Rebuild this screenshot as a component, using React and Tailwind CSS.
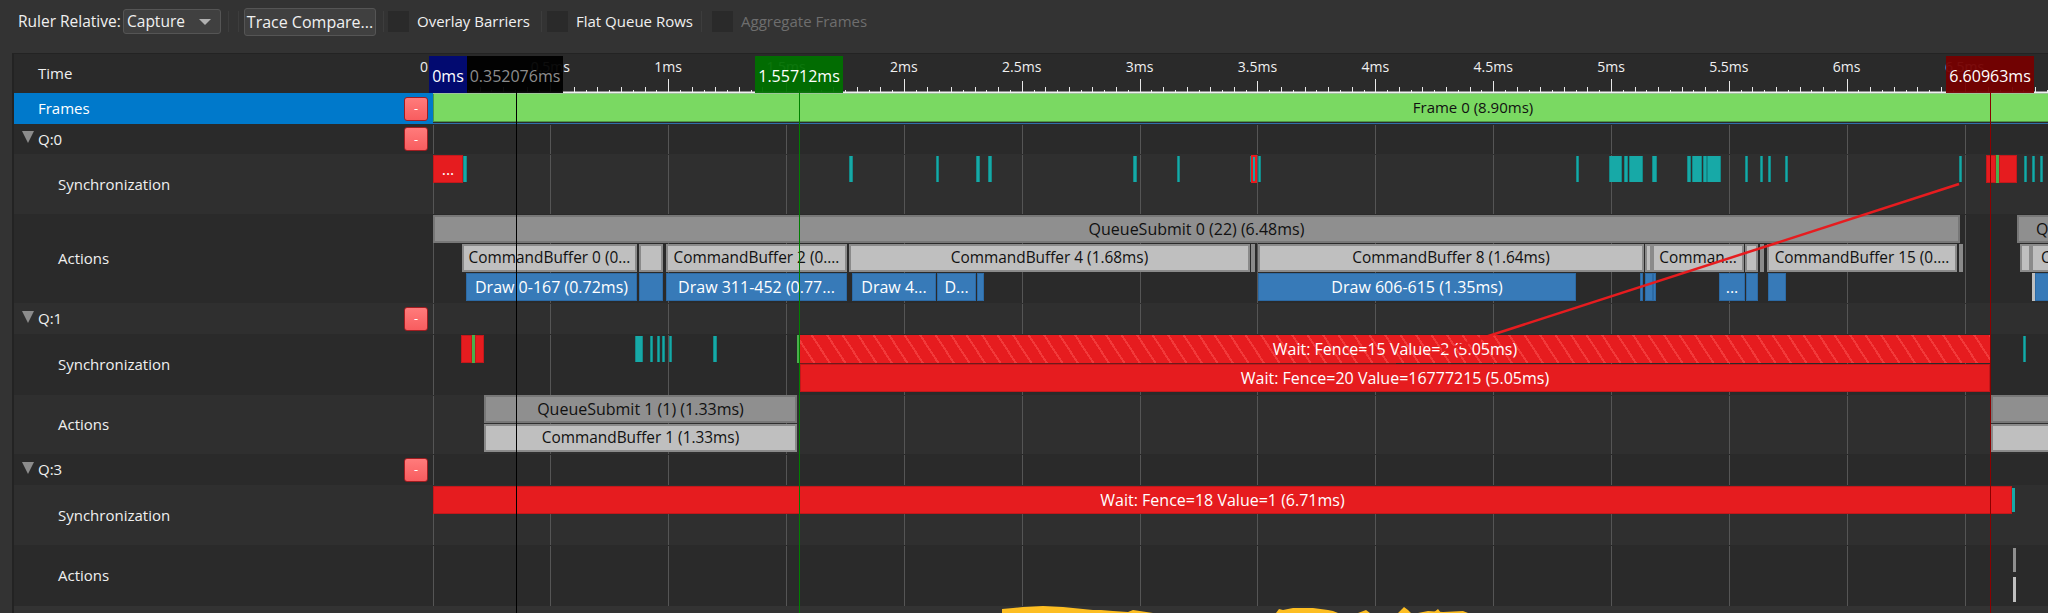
import React from "react";

// timeline coordinates are page x, lanes start at 433
const LANE_X = 433;
const msToX = (ms) => 432.5 + 235.7 * ms;

const GRID = [];
for (let i = 0; i <= 13; i++) GRID.push(Math.round(msToX(i * 0.5)));

const RULER = [
  ["0.5ms", 0.5], ["1ms", 1], ["1.5ms", 1.5], ["2ms", 2], ["2.5ms", 2.5], ["3ms", 3], ["3.5ms", 3.5],
  ["4ms", 4], ["4.5ms", 4.5], ["5ms", 5], ["5.5ms", 5.5], ["6ms", 6], ["6.5ms", 6.5],
];

const TEAL_Q0 = [
  [463, 467], [849, 853], [936, 939], [976, 980], [988, 992], [1133, 1137], [1177, 1180], [1250, 1253], [1258, 1261],
  [1576, 1579], [1609, 1622], [1624, 1628], [1629, 1643], [1652, 1657], [1687, 1691], [1692, 1702], [1703, 1707],
  [1707, 1721], [1745, 1748], [1760, 1763], [1768, 1771], [1785, 1788], [1959, 1962], [2024, 2027], [2032, 2035], [2040, 2043],
];
const TEAL_Q1 = [[635, 643], [650, 653], [657, 660], [662, 665], [669, 672], [713, 717], [2023, 2026]];

const CMD_BUFFERS = [
  [462, 637, "CommandBuffer 0 (0..."], [639, 663, ""], [666, 847, "CommandBuffer 2 (0...."], [849, 1250, "CommandBuffer 4 (1.68ms)"],
  [1251, 1254, ""], [1258, 1644, "CommandBuffer 8 (1.64ms)"], [1645, 1652, ""], [1652, 1744, "Comman..."], [1745, 1758, ""],
  [1760, 1763, ""], [1767, 1957, "CommandBuffer 15 (0...."], [1959, 1962, ""], [2020, 2031, ""],
];
const DRAWS = [
  [466, 637, "Draw 0-167 (0.72ms)"], [639, 663, ""], [666, 847, "Draw 311-452 (0.77..."], [852, 936, "Draw 4..."], [937, 976, "D..."],
  [977, 984, ""], [1258, 1576, "Draw 606-615 (1.35ms)"], [1640, 1643, ""], [1645, 1653, ""], [1653, 1656, ""], [1719, 1745, "..."],
  [1746, 1758, ""], [1768, 1786, ""], [2035, 2060, ""],
];

const TEXT_FONT = "font-['Open_Sans','Liberation_Sans',sans-serif]";

function Ticks() {
  const ticks = [];
  for (let i = 0; i <= 140; i++) {
    const x = Math.round(msToX(i * 0.05)) + 0.5 - LANE_X;
    let top = i % 2 === 0 ? 33 : 36;
    if (i % 10 === 0) top = 27;
    if (i % 20 === 0) top = 25;
    ticks.push(<line key={i} x1={x} x2={x} y1={top} y2={39} stroke="#e8e8e8" strokeWidth="1" />);
  }
  return (
    <svg className="absolute left-0 top-0" width="1615" height="40">
      {ticks}
      <line x1="0" x2="1615" y1="38.5" y2="38.5" stroke="#f0f0f0" strokeWidth="2" />
    </svg>
  );
}

function GridLines() {
  return (
    <>
      {GRID.map((x) => (
        <div key={x} className="absolute top-px bottom-0 w-px bg-[#555555]" style={{ left: x - LANE_X }} />
      ))}
    </>
  );
}

// y is relative to the top of the lane
function Block({ x1, x2, y, h, className, children }) {
  return (
    <div
      className={`absolute box-border flex items-center justify-center overflow-hidden whitespace-nowrap text-[16px] leading-none ${className}`}
      style={{ left: x1 - LANE_X, width: x2 - x1, top: y, height: h }}
    >
      {children}
    </div>
  );
}

const TEAL = "bg-[#17a9a7] border-x border-[#128a88]";
const RED = "bg-[#e61c1f] border border-[#c2181b] text-white";
const GREY = "bg-[#8f8f8f] border-2 border-[#777777] text-[#111111]";
const LIGHT = "bg-[#bfbfbf] border-2 border-[#8a8a8a] !text-[15.4px] text-[#111111]";
const BLUE = "bg-[#377ab8] border border-[#2c6aa5] text-white";

function CollapseButton() {
  return (
    <div className="ml-auto mr-[5px] flex h-6 w-6 items-center justify-center rounded-[3px] border border-[#a01c20] bg-gradient-to-b from-[#ff7b7b] to-[#f85c5f] text-[13px] leading-none text-white">
      -
    </div>
  );
}

function Row({ dark, height, label, queue, children }) {
  return (
    <div className={`flex ${height} ${dark ? "bg-[#2a2a2a]" : "bg-[#2f2f2f]"}`}>
      <div className="flex w-[419px] shrink-0 items-center text-[15px] text-[#f0f0f0]">
        {queue ? (
          <>
            <div className="mb-1 ml-2 h-0 w-0 border-x-[6px] border-t-[12px] border-x-transparent border-t-[#8c8c8c]" />
            <span className="ml-1">{label}</span>
            <CollapseButton />
          </>
        ) : (
          <span className="ml-11">{label}</span>
        )}
      </div>
      <div className="relative flex-1">
        <GridLines />
        {children}
      </div>
    </div>
  );
}

function MarkerBox({ x1, x2, className, children }) {
  return (
    <div
      className={`absolute top-[2px] flex h-[37px] items-center justify-center pt-[2px] text-[16px] leading-none ${className}`}
      style={{ left: x1 - LANE_X, width: x2 - x1 }}
    >
      {children}
    </div>
  );
}

function ToolbarDivider() {
  return <div className="h-[21px] w-px bg-[#3d3d3d]" />;
}

function CheckItem({ label, className }) {
  return (
    <div className={`flex items-center gap-2 ${className}`}>
      <div className="h-[21px] w-[21px] bg-[#2a2a2a]" />
      <span>{label}</span>
    </div>
  );
}

export default function App() {
  return (
    <div className={`relative flex h-[613px] w-[2048px] flex-col overflow-hidden bg-[#333333] ${TEXT_FONT}`}>
      <div className="flex h-[53px] shrink-0 items-center pb-[10px] pl-[18px] text-[15px] text-[#f0f0f0]">
        <span className="w-[105px] text-[15.5px]">Ruler Relative:</span>
        <div className="flex h-[25px] w-[98px] items-center justify-between rounded-[3px] border border-[#555555] bg-[#404040] pl-[3px] pr-[9px] text-[15.5px]">
          <span>Capture</span>
          <div className="h-0 w-0 border-x-[6px] border-t-[6px] border-x-transparent border-t-[#b0b0b0]" />
        </div>
        <div className="ml-[7px] flex gap-[9px]">
          <ToolbarDivider />
          <ToolbarDivider />
        </div>
        <div className="ml-[5px] flex h-[28px] w-[132px] items-center justify-center rounded-[3px] border border-[#555555] bg-[#404040] text-[16px]">
          Trace Compare...
        </div>
        <div className="ml-[7px]">
          <ToolbarDivider />
        </div>
        <CheckItem label="Overlay Barriers" className="ml-[4px] w-[153px]" />
        <ToolbarDivider />
        <CheckItem label="Flat Queue Rows" className="ml-[5px] w-[154px]" />
        <ToolbarDivider />
        <CheckItem label="Aggregate Frames" className="ml-[10px] text-[#6e6e6e]" />
      </div>

      <div className="relative ml-3 flex-1 border-l-2 border-[#232323]">
        {/* ruler */}
        <div className="flex h-10 border-t border-[#232323] bg-[#2a2a2a]">
          <div className="flex w-[419px] shrink-0 items-center pl-6 text-[15px] text-[#f0f0f0]">Time</div>
          <div className="relative flex-1">
            <span className="absolute left-[-13px] top-[3px] text-[14px] leading-[20px] text-[#f0f0f0]">0</span>
            {RULER.map(([label, ms]) => (
              <span
                key={label}
                className="absolute top-[3px] -translate-x-1/2 whitespace-nowrap text-[14px] leading-[20px] text-[#f0f0f0]"
                style={{ left: msToX(ms) - LANE_X }}
              >
                {label}
              </span>
            ))}
            <Ticks />
            <MarkerBox x1={429} x2={467} className="bg-[#020a70] text-white">0ms</MarkerBox>
            <MarkerBox x1={467} x2={563} className="bg-black/95 text-[#8c8c8c]">0.352076ms</MarkerBox>
            <MarkerBox x1={755} x2={843} className="bg-[#007000]/95 text-white">1.55712ms</MarkerBox>
            <MarkerBox x1={1946} x2={2034} className="bg-[#750000]/95 text-white">6.60963ms</MarkerBox>
          </div>
        </div>

        {/* frames */}
        <div className="flex h-[31px] bg-[#2a2a2a]">
          <div className="flex w-[419px] shrink-0 items-center bg-[#0079cb] pl-6 text-[15px] text-white">
            Frames
            <CollapseButton />
          </div>
          <div className="flex-1 overflow-hidden border-b border-[#2f6fa8]">
            <div className="flex h-[29px] w-[2080px] items-center justify-center border border-[#4f9a45] bg-[#7ad962] text-[15px] text-[#111111]">
              Frame 0 (8.90ms)
            </div>
          </div>
        </div>

        <Row dark queue height="h-[30px]" label="Q:0" />
        <Row height="h-[60px]" label="Synchronization">
          <Block x1={433} x2={463} y={1} h={28} className={RED}>...</Block>
          {TEAL_Q0.map(([a, b]) => (
            <Block key={a} x1={a} x2={b} y={2} h={26} className={TEAL} />
          ))}
          <Block x1={1251} x2={1257} y={1} h={28} className="border-2 border-[#e61c1f] bg-[#17a9a7]" />
          <Block x1={1986} x2={1996} y={1} h={28} className={RED} />
          <Block x1={1996} x2={1999} y={1} h={28} className="bg-[#49b04b]" />
          <Block x1={1999} x2={2017} y={1} h={28} className={RED} />
        </Row>
        <Row dark height="h-[89px]" label="Actions">
          <Block x1={433} x2={1960} y={1} h={28} className={GREY}>QueueSubmit 0 (22) (6.48ms)</Block>
          <Block x1={2017} x2={2060} y={1} h={28} className={`${GREY} !justify-start pl-[17px]`}>Q</Block>
          {CMD_BUFFERS.map(([a, b, t]) => (
            <Block key={a} x1={a} x2={b} y={30} h={28} className={LIGHT}>{t}</Block>
          ))}
          <Block x1={2031} x2={2060} y={30} h={28} className={`${LIGHT} !justify-start pl-2`}>C</Block>
          {DRAWS.map(([a, b, t]) => (
            <Block key={a} x1={a} x2={b} y={59} h={28} className={BLUE}>{t}</Block>
          ))}
          <Block x1={2032} x2={2035} y={59} h={28} className="bg-[#bfbfbf]" />
        </Row>

        <Row queue height="h-[31px]" label="Q:1" />
        <Row dark height="h-[61px]" label="Synchronization">
          <Block x1={461} x2={472} y={1} h={28} className={RED} />
          <Block x1={472} x2={475} y={1} h={28} className="bg-[#49b04b]" />
          <Block x1={475} x2={484} y={1} h={28} className={RED} />
          {TEAL_Q1.map(([a, b]) => (
            <Block key={a} x1={a} x2={b} y={2} h={26} className={TEAL} />
          ))}
          <Block x1={797} x2={800} y={1} h={28} className="bg-[#49b04b]" />
          <Block
            x1={800}
            x2={1990}
            y={1}
            h={28}
            className="bg-[repeating-linear-gradient(57deg,#e61c1f_0,#e61c1f_11px,#f23a3a_11px,#f23a3a_13px)] text-white"
          >
            Wait: Fence=15 Value=2 (5.05ms)
          </Block>
          <Block x1={800} x2={1396} y={29} h={1} className="bg-[#6e1a1c]" />
          <Block x1={800} x2={1990} y={30} h={28} className={RED}>Wait: Fence=20 Value=16777215 (5.05ms)</Block>
        </Row>
        <Row height="h-[59px]" label="Actions">
          <Block x1={484} x2={797} y={0} h={28} className={GREY}>QueueSubmit 1 (1) (1.33ms)</Block>
          <Block x1={484} x2={797} y={29} h={28} className={LIGHT}>CommandBuffer 1 (1.33ms)</Block>
          <Block x1={1991} x2={2060} y={0} h={28} className={GREY} />
          <Block x1={1991} x2={2060} y={29} h={28} className={LIGHT} />
        </Row>

        <Row dark queue height="h-[31px]" label="Q:3" />
        <Row height="h-[60px]" label="Synchronization">
          <Block x1={433} x2={2012} y={1} h={28} className={RED}>Wait: Fence=18 Value=1 (6.71ms)</Block>
          <Block x1={2012} x2={2015} y={3} h={24} className="bg-[#17a9a7]" />
        </Row>
        <Row dark height="h-[61px]" label="Actions">
          <Block x1={2013} x2={2016} y={3} h={24} className="bg-[#8f8f8f]" />
          <Block x1={2013} x2={2016} y={32} h={25} className="bg-[#bfbfbf]" />
        </Row>
        <Row height="flex-1" label="">
          <svg className="absolute left-0 top-0" width="1615" height="8">
            <polygon
              fill="#fdbe22"
              points="569,7 569,3 580,2 590,1 610,0 630,1 640,2 650,3 660,4 668,4 680,5 695,6 700,4 720,7 700,7"
            />
            <polygon
              fill="#fdbe22"
              points="843,7 846,3 850,4 860,2 880,2 895,4 900,5 905,7 925,7 933,4 937,7 965,7 971,1 975,4 978,7 1000,7 1005,3 1008,7"
            />
            <polygon fill="#fdbe22" points="985,7 995,5 1010,6 1030,5 1035,7" />
          </svg>
        </Row>

        {/* selection lines and the signal line lie over the lanes */}
        <div className="absolute bottom-0 left-[502px] top-[36px] w-px bg-black" />
        <div className="absolute bottom-0 left-[785px] top-[39px] w-px bg-[#008000]" />
        <div className="absolute bottom-0 left-[1976px] top-[39px] w-px bg-[#8b0000]" />
        <svg className="pointer-events-none absolute left-0 top-0" width="2034" height="560">
          <line x1="1945" y1="131" x2="1428" y2="298" stroke="#e61c1f" strokeWidth="2.5" />
        </svg>
      </div>
    </div>
  );
}
